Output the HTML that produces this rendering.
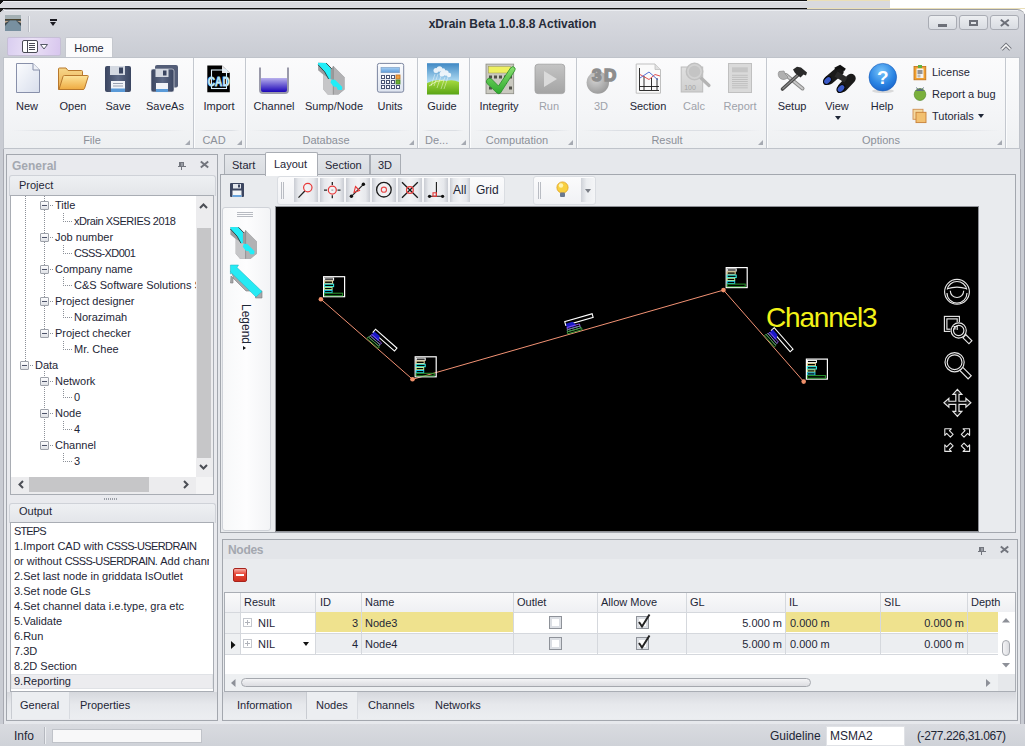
<!DOCTYPE html>
<html><head><meta charset="utf-8">
<style>
*{margin:0;padding:0;box-sizing:border-box}
html,body{width:1025px;height:746px;overflow:hidden;background:#fff}
body{position:relative;font-family:"Liberation Sans",sans-serif;font-size:11px;color:#1e2636}
.a{position:absolute}
.t{position:absolute;white-space:nowrap;line-height:13px;font-size:11px}
.c{text-align:center}
.gl{color:#8c9099}
.dis{color:#9ea2aa}
.sep{position:absolute;top:58px;width:2px;height:90px;border-left:1px solid #c4c8cf;border-right:1px solid #fbfcfd}
.gline{position:absolute;top:130px;height:1px;background:linear-gradient(90deg,rgba(215,218,224,0),#dcdfe4 20%,#dcdfe4 80%,rgba(215,218,224,0))}
.launch{position:absolute;width:0;height:0;border-left:5px solid transparent;border-bottom:5px solid #a6aab2;top:140px}
svg{position:absolute;overflow:visible}
</style></head><body>

<!-- top strip (other windows) -->
<div class="a" style="left:0;top:0;width:1025px;height:9px;background:#fff"></div>
<div class="a" style="left:0;top:0;width:890px;height:9px;background:#d9dadf"></div>
<div class="a" style="left:0;top:0;width:807px;height:1px;background:#111"></div>
<div class="a" style="left:807px;top:0;width:83px;height:1px;background:#eadfb8"></div>
<div class="a" style="left:0;top:8px;width:807px;height:1px;background:#111"></div>
<div class="a" style="left:3px;top:1px;width:804px;height:1px;background:#eceef2"></div>
<div class="a" style="left:0;top:0;width:3px;height:8px;background:linear-gradient(135deg,#111 40%,transparent 41%)"></div>
<div class="a" style="left:807px;top:8px;width:218px;height:1px;background:#eadfb8"></div>

<!-- window frame -->
<div class="a" style="left:0;top:9px;width:1025px;height:737px;background:linear-gradient(#dadce1,#d1d3da 25px,#c9ccd3 48px,#c9ccd3);border-radius:6px 8px 0 0;border-top:1px solid #9a9ca2"></div>

<div class="a" style="left:1024px;top:14px;width:1px;height:732px;background:#9a9ca6"></div>
<div class="a" style="left:4px;top:10px;width:1014px;height:1px;background:#eceef2"></div>
<div class="a" style="left:0;top:9px;width:4px;height:6px;background:linear-gradient(135deg,#222 35%,transparent 36%)"></div>
<!-- title -->
<div class="t" style="left:0;width:1025px;text-align:center;top:18px;font-weight:bold;font-size:12px;color:#262c3a">xDrain Beta 1.0.8.8 Activation</div>


<!-- quick access -->
<svg style="left:5px;top:15px" width="16" height="16"><rect width="16" height="16" fill="#6a7a84"/><rect y="0" width="16" height="4" fill="#a4b0b4"/><rect y="4" width="16" height="1.5" fill="#4a4430"/><path d="M0 5.5 L16 5.5 L16 16 L0 16 Z" fill="#3e4a50"/><path d="M5 5.5 L11 5.5 L16 11 L16 16 L0 16 L0 11 Z" fill="#7890a0"/><path d="M0 6 L4 6 L0 8 Z M16 6 L12 6 L16 8 Z" fill="#c0a890"/></svg>
<div class="a" style="left:28px;top:16px;width:1px;height:16px;background:#b9bcc4;box-shadow:1px 0 0 #eef0f3"></div>
<div class="a" style="left:50px;top:19px;width:7px;height:2px;background:#1b1b22"></div>
<div class="a" style="left:50px;top:22px;width:0;height:0;border-left:3.5px solid transparent;border-right:3.5px solid transparent;border-top:4px solid #1b1b22"></div>

<!-- window buttons -->
<div class="a" style="left:928px;top:15px;width:29px;height:15px;border:1px solid #a9acb4;border-radius:3px;background:linear-gradient(#eceef1,#d9dce2)"></div>
<div class="a" style="left:959px;top:15px;width:29px;height:15px;border:1px solid #a9acb4;border-radius:3px;background:linear-gradient(#eceef1,#d9dce2)"></div>
<div class="a" style="left:990px;top:15px;width:29px;height:15px;border:1px solid #a9acb4;border-radius:3px;background:linear-gradient(#eceef1,#d9dce2)"></div>
<div class="a" style="left:938px;top:24px;width:9px;height:2.5px;background:#6c6f78"></div>
<div class="a" style="left:969px;top:19.5px;width:9px;height:6.5px;border:2px solid #6c6f78"></div>
<svg style="left:1000px;top:19px" width="10" height="8"><path d="M0.8 0.8 L8.8 7 M8.8 0.8 L0.8 7" stroke="#6c6f78" stroke-width="2"/></svg>

<!-- ribbon tabs -->
<div class="a" style="left:7px;top:37px;width:54px;height:19px;border:1px solid #c6bfd6;border-radius:2px;background:linear-gradient(100deg,#d9cdf0,#ebe2f6 45%,#d8c6ee)"></div>
<div class="a" style="left:22px;top:40px;width:16px;height:13px;border:1px solid #4a4a55;border-radius:2px;background:#fff"></div>
<div class="a" style="left:27px;top:41px;width:1px;height:11px;background:#4a4a55"></div>
<div class="a" style="left:29px;top:43px;width:6px;height:7px;background:repeating-linear-gradient(#4a4a55 0 1px,transparent 1px 2px)"></div>
<svg style="left:40px;top:44px" width="8" height="6"><path d="M0.5 0.5 L7.5 0.5 L4 5 Z" fill="#fff" stroke="#555a66" stroke-width="1"/></svg>
<div class="a" style="left:65px;top:37px;width:48px;height:21px;border:1px solid #c5c8ce;border-bottom:none;border-radius:2px 2px 0 0;background:#fbfbfc"></div>
<div class="t" style="left:65px;width:48px;text-align:center;top:42px;color:#1e2636">Home</div>
<svg style="left:1000px;top:43px" width="12" height="8"><path d="M1.5 6.5 L6 2 L10.5 6.5" fill="none" stroke="#6d7079" stroke-width="3.4"/><path d="M1.5 6.5 L6 2 L10.5 6.5" fill="none" stroke="#fafafa" stroke-width="1.6"/></svg>

<!-- ribbon panel -->
<div class="a" style="left:3px;top:57px;width:1017px;height:92px;border:1px solid #bfc3ca;background:linear-gradient(#fbfbfc,#f4f5f7 60%,#eef0f2)"></div>
<div class="sep" style="left:193px"></div>
<div class="sep" style="left:245px"></div>
<div class="sep" style="left:417px"></div>
<div class="sep" style="left:469px"></div>
<div class="sep" style="left:576px"></div>
<div class="sep" style="left:766px"></div>
<div class="sep" style="left:1005px"></div>
<div class="gline" style="left:12px;width:174px"></div>
<div class="gline" style="left:198px;width:42px"></div>
<div class="gline" style="left:250px;width:162px"></div>
<div class="gline" style="left:422px;width:42px"></div>
<div class="gline" style="left:474px;width:97px"></div>
<div class="gline" style="left:581px;width:180px"></div>
<div class="gline" style="left:771px;width:229px"></div>
<div class="launch" style="left:185px"></div>
<div class="launch" style="left:237px"></div>
<div class="launch" style="left:409px"></div>
<div class="launch" style="left:461px"></div>
<div class="launch" style="left:568px"></div>
<div class="launch" style="left:758px"></div>
<div class="launch" style="left:997px"></div>

<!-- ribbon icons -->
<svg style="left:0;top:0" width="1025" height="150">
<defs>
<linearGradient id="gNew" x1="0" y1="0" x2="1" y2="1"><stop offset="0" stop-color="#fbfcfe"/><stop offset="1" stop-color="#d8deec"/></linearGradient>
<linearGradient id="gFold" x1="0" y1="0" x2="0" y2="1"><stop offset="0" stop-color="#fde49a"/><stop offset="1" stop-color="#eeaa40"/></linearGradient>
<linearGradient id="gFold2" x1="0" y1="0" x2="0" y2="1"><stop offset="0" stop-color="#f7d78a"/><stop offset="1" stop-color="#e8a848"/></linearGradient>
<linearGradient id="gFlop" x1="0" y1="0" x2="1" y2="0"><stop offset="0" stop-color="#3a4560"/><stop offset="0.5" stop-color="#5e6a86"/><stop offset="1" stop-color="#3a4560"/></linearGradient>
<linearGradient id="gLiq" x1="0" y1="0" x2="0" y2="1"><stop offset="0" stop-color="#b8b0ec"/><stop offset="1" stop-color="#1c06b8"/></linearGradient>
<linearGradient id="gCalc" x1="0" y1="0" x2="0" y2="1"><stop offset="0" stop-color="#fbfcfe"/><stop offset="1" stop-color="#dde3ee"/></linearGradient>
<linearGradient id="gDisp" x1="0" y1="0" x2="0" y2="1"><stop offset="0" stop-color="#a8d0f4"/><stop offset="1" stop-color="#5c9ad8"/></linearGradient>
<linearGradient id="gSky" x1="0" y1="0" x2="0" y2="1"><stop offset="0" stop-color="#3f88c4"/><stop offset="0.6" stop-color="#b4def4"/><stop offset="1" stop-color="#d8f0f8"/></linearGradient>
<linearGradient id="gGrass" x1="0" y1="0" x2="0" y2="1"><stop offset="0" stop-color="#a8dc40"/><stop offset="1" stop-color="#5aa414"/></linearGradient>
<linearGradient id="gRun" x1="0" y1="0" x2="0" y2="1"><stop offset="0" stop-color="#c4c4c4"/><stop offset="1" stop-color="#a4a4a4"/></linearGradient>
<radialGradient id="gSph" cx="0.4" cy="0.35" r="0.7"><stop offset="0" stop-color="#d4d4d4"/><stop offset="1" stop-color="#989898"/></radialGradient>
<radialGradient id="gHelp" cx="0.45" cy="0.3" r="0.75"><stop offset="0" stop-color="#78c4fa"/><stop offset="0.6" stop-color="#2c86e4"/><stop offset="1" stop-color="#1660c8"/></radialGradient>
<linearGradient id="gCheck" x1="0" y1="0" x2="0" y2="1"><stop offset="0" stop-color="#8ae070"/><stop offset="1" stop-color="#2eaa2e"/></linearGradient>
<linearGradient id="gGray" x1="0" y1="0" x2="0" y2="1"><stop offset="0" stop-color="#e0e0e0"/><stop offset="1" stop-color="#cfcfcf"/></linearGradient>
</defs>
<!-- New -->
<path d="M16.5 63.5 L33 63.5 L39.5 70 L39.5 92.5 L16.5 92.5 Z" fill="url(#gNew)" stroke="#8890aa" stroke-width="1"/>
<path d="M33 63.5 L33 70 L39.5 70" fill="#eef1f7" stroke="#8890aa" stroke-width="1"/>
<!-- Open -->
<path d="M58.5 89.5 L58.5 69 Q58.5 68 59.5 68 L66 68 L68 70.5 L81.5 70.5 Q82.5 70.5 82.5 71.5 L82.5 89.5 Z" fill="url(#gFold2)" stroke="#b8782c" stroke-width="1"/>
<path d="M59 89.5 L63 76.5 Q63.3 75.5 64.5 75.5 L87.5 75.5 Q88.5 75.5 88.2 76.5 L84.5 88.5 Q84.2 89.5 83 89.5 Z" fill="url(#gFold)" stroke="#b8782c" stroke-width="1"/>
<!-- Save -->
<rect x="105" y="66" width="26" height="26" rx="2" fill="url(#gFlop)"/>
<rect x="110" y="66" width="15" height="9" fill="#d4d9e2"/>
<rect x="119" y="67.5" width="4" height="6" fill="#3a4560"/>
<rect x="111" y="81" width="14" height="11" fill="#f2f4f8"/>
<rect x="111" y="88.5" width="14" height="3.5" fill="#5a9ad8"/>
<rect x="113" y="83" width="10" height="1" fill="#9aa2b2"/><rect x="113" y="85.5" width="10" height="1" fill="#9aa2b2"/>
<!-- SaveAs -->
<rect x="155" y="65" width="23" height="22.5" rx="2" fill="#545e78"/>
<rect x="151" y="69" width="23" height="23" rx="2" fill="url(#gFlop)" stroke="#e8eaee" stroke-width="0.6"/>
<rect x="155.5" y="69" width="13" height="8" fill="#d4d9e2"/>
<rect x="163" y="70.5" width="3.5" height="5" fill="#3a4560"/>
<rect x="156" y="83" width="12" height="9" fill="#f2f4f8"/>
<rect x="156" y="89" width="12" height="3" fill="#5a9ad8"/>
<!-- CAD -->
<path d="M207.3 65.4 L222 65.4 L229.8 73 L229.8 92.2 L207.3 92.2 Z" fill="#000"/>
<path d="M222 65.4 L229.8 73 L222 73 Z" fill="#e8e8ea"/>
<rect x="211.5" y="70" width="15" height="18.5" fill="none" stroke="#dff2ff" stroke-width="1.1"/>
<g transform="translate(0,86.5) scale(1,1.35) translate(0,-86.5)" style="font-family:'Liberation Sans';font-weight:700;font-size:10px" fill="#fff" stroke="#9ad8f4" stroke-width="0.7">
<text x="207.8" y="86.5">C</text><text x="215" y="86.5">A</text><text x="222.6" y="86.5">D</text></g>
<!-- Channel beaker -->
<rect x="261" y="78" width="26" height="14" fill="url(#gLiq)"/>
<path d="M260 67.5 L260 90 Q260 93 263 93 L285 93 Q288 93 288 90 L288 67.5" fill="none" stroke="#9a9aaa" stroke-width="2"/>
<!-- Sump/Node -->
<polygon points="318.1,64.6 318.1,70.2 323.4,74.8 323.4,89.5 327.7,94.6 338.4,94.6 344.5,89.5 344.5,77.3 333.3,66.1 331.6,68.7 326.2,63.1 318.1,62.8" fill="#9c9c9e"/>
<polygon points="333.3,66.1 344.5,77.3 344.5,89.5 338.4,94.6 333.3,94.6" fill="#b2b2b4"/>
<polygon points="323.4,74.8 333.3,80.5 333.3,94.6 327.7,94.6 323.4,89.5" fill="#c6c6c8"/>
<polyline points="333.3,66.1 333.3,94.6" fill="none" stroke="#8a8a8c" stroke-width="0.8"/>
<polygon points="318.1,62.8 326.2,63.1 330.6,68.3 330.6,79.0 328.6,79.0 324.7,71.9 318.1,65.0" fill="#22eef8"/>
<polyline points="318.1,64.8 324.7,71.9 328.6,79.0" fill="none" stroke="#2a3a3c" stroke-width="0.9"/>
<polyline points="326.2,63.1 331.8,68.8" fill="none" stroke="#2a3a3c" stroke-width="0.9"/>
<polygon points="331.5,79.6 335.0,79.8 342.3,87.0 341.8,90.0 338.0,90.0 336.5,87.0 333.5,86.5 330.5,82.5" fill="#22eef8"/>
<!-- Units calculator -->
<rect x="377.4" y="63.4" width="26.3" height="28.8" rx="2" fill="url(#gCalc)" stroke="#7c86a0" stroke-width="1"/>
<rect x="381" y="67.3" width="18.5" height="5.4" fill="url(#gDisp)" stroke="#7a9ac0" stroke-width="0.6"/>
<g fill="#fff" stroke="#4a5474" stroke-width="1">
<rect x="381.5" y="75.5" width="3" height="3"/><rect x="386.5" y="75.5" width="3" height="3"/><rect x="391.5" y="75.5" width="3" height="3"/>
<rect x="381.5" y="80.5" width="3" height="3"/><rect x="386.5" y="80.5" width="3" height="3"/><rect x="391.5" y="80.5" width="3" height="3"/>
<rect x="381.5" y="85.5" width="3" height="3"/><rect x="386.5" y="85.5" width="3" height="3"/><rect x="391.5" y="85.5" width="3" height="3"/><rect x="396.5" y="85.5" width="3" height="3"/>
</g>
<rect x="396" y="75" width="4" height="4" fill="#f0a040" stroke="#c07020" stroke-width="0.8"/>
<rect x="396" y="80" width="4" height="4" fill="#70b030" stroke="#408020" stroke-width="0.8"/>
<!-- Guide -->
<rect x="427" y="63.2" width="32" height="31.4" fill="url(#gSky)"/>
<path d="M427 83 Q437 78 446 81 Q453 79 459 82 L459 94.6 L427 94.6 Z" fill="url(#gGrass)"/>
<path d="M429 86 Q436 80 444 80" fill="none" stroke="#e8f8c0" stroke-width="1" opacity="0.8"/>
<g fill="#fff" opacity="0.85"><circle cx="436" cy="70.5" r="2.5"/><circle cx="439.5" cy="69" r="2.8"/><circle cx="443" cy="70.5" r="2.3"/><circle cx="442" cy="74" r="2.5"/><circle cx="446" cy="73" r="2.7"/><circle cx="449" cy="75" r="2.2"/></g>
<path d="M435 74 L431 86 M438 74 L434 86 M441 76 L437 88 M445 77 L441 89 M448 77 L444 89" stroke="#fff" stroke-width="0.6" opacity="0.7"/>
<!-- Integrity -->
<rect x="486" y="64.1" width="27.7" height="29.6" fill="#cac9c0" stroke="#8c8c84" stroke-width="0.8"/>
<rect x="488.5" y="66.5" width="22" height="6.5" fill="#eef060" stroke="#9a9a50" stroke-width="0.5"/>
<g fill="#505048"><rect x="489" y="75.5" width="3" height="3"/><rect x="494" y="75.5" width="3" height="3"/><rect x="499" y="75.5" width="3" height="3"/><rect x="504" y="75.5" width="3" height="3"/><rect x="489" y="81" width="3" height="3"/><rect x="504" y="81" width="3" height="3"/><rect x="489" y="86.5" width="3" height="3"/><rect x="509" y="86.5" width="3" height="3"/><rect x="509" y="75.5" width="3" height="3"/></g>
<path d="M486.5 80.5 Q488 77 491 78.5 L498.5 86 L510.5 68 Q513 65 515 68 Q515.5 69.5 514.5 71 L500.5 93 Q499 94.5 497 93 L487 83.5 Q486 82 486.5 80.5 Z" fill="url(#gCheck)" stroke="#2a8a2a" stroke-width="0.8"/>
<!-- Run -->
<rect x="535" y="64.2" width="29.7" height="29.4" rx="3" fill="url(#gRun)" stroke="#a0a0a0" stroke-width="0.8"/>
<path d="M544 71 L557 79 L544 87 Z" fill="#dadada"/>
<!-- 3D -->
<circle cx="597.8" cy="82.6" r="11.2" fill="url(#gSph)"/>
<text x="592" y="80.8" style="font-family:'Liberation Sans';font-weight:700;font-size:17px" fill="#8e8e8e" stroke="#8e8e8e" stroke-width="1.6" letter-spacing="2.5">3D</text>
<!-- Section -->
<path d="M636.2 64 L655 64 L660.5 69.5 L660.5 93.2 L636.2 93.2 Z" fill="#fafafa" stroke="#c0c0c0" stroke-width="1"/>
<path d="M655 64 L655 69.5 L660.5 69.5" fill="#e0e0e0" stroke="#c0c0c0" stroke-width="0.8"/>
<path d="M639.5 68 L639.5 90.5 L659 90.5 M639.5 86.5 L659 86.5 M644 76 L644 90 M651.5 78 L651.5 90 M657 78 L657 90" fill="none" stroke="#1a1a1a" stroke-width="0.9"/>
<path d="M640 74.5 L649 79.5 L655 74.5 L660 76" fill="none" stroke="#e04040" stroke-width="0.9"/>
<path d="M640 78 L649 72 L658 80" fill="none" stroke="#4060d0" stroke-width="0.9"/>
<!-- Calc -->
<rect x="681.2" y="67" width="21.5" height="25" fill="url(#gGray)" stroke="#bcbcbc" stroke-width="1"/>
<path d="M700 77 L709 85.5" stroke="#b4b4b4" stroke-width="3.2" stroke-linecap="round"/>
<circle cx="694.5" cy="71.5" r="8.2" fill="#d2d2d2" stroke="#c0c0c0" stroke-width="1.5"/>
<circle cx="694.5" cy="71.5" r="5.8" fill="#c4c4c4"/>
<text x="690" y="90" font-family="Liberation Sans" font-size="7" fill="#a6a6a6" text-anchor="middle">100</text>
<!-- Report -->
<rect x="728.5" y="63.5" width="23" height="29" fill="#dadada" stroke="#c0c0c0" stroke-width="1"/>
<rect x="732" y="67.3" width="15.8" height="5" fill="#c6c6c6"/>
<g fill="#bdbdbd"><rect x="732" y="74.8" width="15.8" height="0.9"/><rect x="732" y="76.9" width="15.8" height="0.9"/><rect x="732" y="79" width="15.8" height="0.9"/><rect x="732" y="81.1" width="15.8" height="0.9"/><rect x="732" y="83.2" width="15.8" height="0.9"/><rect x="732" y="85.3" width="15.8" height="0.9"/><rect x="732" y="87.4" width="15.8" height="0.9"/></g>
<!-- Setup -->
<path d="M786 75 L802.5 88.5" stroke="#8a8a8a" stroke-width="4" stroke-linecap="round"/>
<path d="M786 75 L802.5 88.5" stroke="#c8c8c8" stroke-width="2" stroke-linecap="round"/>
<path d="M779 71.5 A5 5 0 0 0 788 77 L785.5 74.5 L784 71 Z" fill="#b0b0b0" stroke="#8a8a8a" stroke-width="0.7"/>
<path d="M782.5 89 L798 75" stroke="#4a4a4a" stroke-width="3.6" stroke-linecap="round"/>
<path d="M782.5 89 L798 75" stroke="#8a8a8a" stroke-width="1.2"/>
<path d="M793 69.5 L797 66.8 L801 67.5 L807 72.5 L806 75.5 L803.5 74.5 L800.5 77.5 L795 73 Z" fill="#2a2a2a"/>
<!-- View binoculars -->
<path d="M829 80 L839 71.5" stroke="#1a1a1a" stroke-width="9.5" stroke-linecap="round"/>
<path d="M842.5 87.5 L851 78.5" stroke="#1a1a1a" stroke-width="9.5" stroke-linecap="round"/>
<path d="M836 74 L846 80" stroke="#2a2a2a" stroke-width="6"/>
<path d="M835 69 L840 66.5 L845 70" stroke="#111" stroke-width="3" fill="none"/>
<ellipse cx="827.5" cy="80.5" rx="4.5" ry="3.3" transform="rotate(-45 827.5 80.5)" fill="#3a5ac8" stroke="#0a0a0a" stroke-width="1.3"/>
<ellipse cx="841" cy="88.5" rx="4.5" ry="3.3" transform="rotate(-45 841 88.5)" fill="#3a5ac8" stroke="#0a0a0a" stroke-width="1.3"/>
<!-- Help -->
<ellipse cx="883" cy="91" rx="11" ry="2" fill="#000" opacity="0.12"/>
<circle cx="882.8" cy="77.2" r="13.8" fill="url(#gHelp)" stroke="#1a5cb8" stroke-width="0.6"/>
<text x="882.8" y="84" font-family="Liberation Sans" font-weight="bold" font-size="19" fill="#fff" text-anchor="middle">?</text>
<!-- License -->
<rect x="914" y="66.5" width="11.8" height="13.3" fill="#f0a030" stroke="#c07018" stroke-width="0.8"/>
<rect x="916.5" y="68.5" width="7" height="9.5" fill="#f4f4f4"/>
<rect x="917.5" y="70.5" width="5" height="1" fill="#333"/><rect x="917.5" y="72.5" width="5" height="1" fill="#333"/><rect x="917.5" y="74.5" width="3" height="3" fill="#bbb"/>
<rect x="918" y="65" width="4" height="3" fill="#60b040"/>
<!-- Bug -->
<ellipse cx="920" cy="94.5" rx="5.8" ry="6" fill="#7ab03c" stroke="#4a8020" stroke-width="0.6"/>
<path d="M915.5 91 Q920 86 924.5 91 Z" fill="#5a6a80"/>
<path d="M916.5 87.5 L917.5 89 M923.5 87.5 L922.5 89" stroke="#5a6a80" stroke-width="1"/>
<!-- Tutorials -->
<rect x="913" y="109.3" width="10" height="10" fill="#f4d8a0" stroke="#d09050" stroke-width="0.9"/>
<rect x="916" y="112.3" width="10" height="10.3" fill="#f2c070" stroke="#c88038" stroke-width="0.9"/>
</svg>

<!-- group labels -->
<div class="t c gl" style="left:42px;width:100px;top:134px">File</div>
<div class="t c gl" style="left:164px;width:100px;top:134px">CAD</div>
<div class="t c gl" style="left:276px;width:100px;top:134px">Database</div>
<div class="t gl" style="left:425px;top:134px">De...</div>
<div class="t c gl" style="left:467px;width:100px;top:134px">Computation</div>
<div class="t c gl" style="left:617px;width:100px;top:134px">Result</div>
<div class="t c gl" style="left:831px;width:100px;top:134px">Options</div>

<!-- button labels -->
<div class="t c" style="left:-3px;width:60px;top:100px">New</div>
<div class="t c" style="left:43px;width:60px;top:100px">Open</div>
<div class="t c" style="left:88px;width:60px;top:100px">Save</div>
<div class="t c" style="left:135px;width:60px;top:100px">SaveAs</div>
<div class="t c" style="left:189px;width:60px;top:100px">Import</div>
<div class="t c" style="left:244px;width:60px;top:100px">Channel</div>
<div class="t c" style="left:299px;width:70px;top:100px">Sump/Node</div>
<div class="t c" style="left:360px;width:60px;top:100px">Units</div>
<div class="t c" style="left:412px;width:60px;top:100px">Guide</div>
<div class="t c" style="left:469px;width:60px;top:100px">Integrity</div>
<div class="t c dis" style="left:519px;width:60px;top:100px">Run</div>
<div class="t c dis" style="left:571px;width:60px;top:100px">3D</div>
<div class="t c" style="left:618px;width:60px;top:100px">Section</div>
<div class="t c dis" style="left:664px;width:60px;top:100px">Calc</div>
<div class="t c dis" style="left:710px;width:60px;top:100px">Report</div>
<div class="t c" style="left:762px;width:60px;top:100px">Setup</div>
<div class="t c" style="left:807px;width:60px;top:100px">View</div>
<div class="a" style="left:835px;top:116px;width:0;height:0;border-left:3px solid transparent;border-right:3px solid transparent;border-top:4px solid #1e2636"></div>
<div class="t c" style="left:852px;width:60px;top:100px">Help</div>
<div class="t" style="left:932px;top:66px">License</div>
<div class="t" style="left:932px;top:88px">Report a bug</div>
<div class="t" style="left:932px;top:110px">Tutorials</div>
<div class="a" style="left:978px;top:114px;width:0;height:0;border-left:3px solid transparent;border-right:3px solid transparent;border-top:4px solid #1e2636"></div>


<!-- body bg -->
<div class="a" style="left:3px;top:149px;width:1018px;height:575px;background:#e6e8ec;border-left:1px solid #a8aab2;border-right:1px solid #a8aab2"></div>

<!-- ============ General panel ============ -->
<div class="a" style="left:6px;top:154px;width:212px;height:567px;border:1px solid #a3a7ae;background:#e9eaee"></div>
<div class="t" style="left:12px;top:160px;font-weight:bold;font-size:12px;color:#a4a8b0">General</div>
<!-- pin -->
<div class="a" style="left:179px;top:162px;width:5px;height:5px;border:1px solid #73767e;border-left-width:2px;background:#9a9da5"></div>
<div class="a" style="left:178px;top:166px;width:8px;height:1px;background:#73767e"></div>
<div class="a" style="left:181px;top:167px;width:1px;height:3px;background:#73767e"></div>
<svg style="left:200px;top:161px" width="9" height="7"><path d="M0.8 0.5 L8.2 6.5 M8.2 0.5 L0.8 6.5" stroke="#73767e" stroke-width="2"/></svg>
<!-- project header -->
<div class="a" style="left:9px;top:175px;width:207px;height:21px;border:1px solid #cfd2d8;border-bottom:none;border-radius:3px 3px 0 0;background:linear-gradient(#eef0f3,#e3e5e9)"></div>
<div class="t" style="left:19px;top:179px;color:#1e2636">Project</div>
<!-- tree box -->
<div class="a" style="left:10px;top:195px;width:204px;height:300px;border:1px solid #a9adb4;background:#fff"></div>
<!-- tree -->
<div class="a" style="left:11px;top:196px;width:185px;height:281px;overflow:hidden">
<div class="a" style="left:14px;top:0px;width:1px;height:165px;background:repeating-linear-gradient(#8c9098 0 1px,transparent 1px 2px)"></div>
<div class="a" style="left:33px;top:0px;width:1px;height:133px;background:repeating-linear-gradient(#8c9098 0 1px,transparent 1px 2px)"></div>
<div class="a" style="left:33px;top:175px;width:1px;height:70px;background:repeating-linear-gradient(#8c9098 0 1px,transparent 1px 2px)"></div>
<div class="a" style="left:29px;top:5px;width:9px;height:9px;border:1px solid #9da1a9;border-radius:1px;background:linear-gradient(#fdfdfe,#dfe1e6)"></div><div class="a" style="left:31px;top:9px;width:5px;height:1px;background:#4d5369"></div>
<div class="a" style="left:39px;top:9px;width:3px;height:1px;background:repeating-linear-gradient(90deg,#8c9098 0 1px,transparent 1px 2px)"></div>
<div class="t" style="left:44px;top:3px">Title</div>
<div class="a" style="left:52px;top:17px;width:1px;height:8px;background:repeating-linear-gradient(#8c9098 0 1px,transparent 1px 2px)"></div>
<div class="a" style="left:52px;top:25px;width:9px;height:1px;background:repeating-linear-gradient(90deg,#8c9098 0 1px,transparent 1px 2px)"></div>
<div class="t" style="left:63px;top:19px"><span style="letter-spacing:-0.45px">xDrain XSERIES 2018</span></div>
<div class="a" style="left:29px;top:37px;width:9px;height:9px;border:1px solid #9da1a9;border-radius:1px;background:linear-gradient(#fdfdfe,#dfe1e6)"></div><div class="a" style="left:31px;top:41px;width:5px;height:1px;background:#4d5369"></div>
<div class="a" style="left:39px;top:41px;width:3px;height:1px;background:repeating-linear-gradient(90deg,#8c9098 0 1px,transparent 1px 2px)"></div>
<div class="t" style="left:44px;top:35px">Job number</div>
<div class="a" style="left:52px;top:49px;width:1px;height:8px;background:repeating-linear-gradient(#8c9098 0 1px,transparent 1px 2px)"></div>
<div class="a" style="left:52px;top:57px;width:9px;height:1px;background:repeating-linear-gradient(90deg,#8c9098 0 1px,transparent 1px 2px)"></div>
<div class="t" style="left:63px;top:51px"><span style="letter-spacing:-0.6px">CSSS-XD001</span></div>
<div class="a" style="left:29px;top:69px;width:9px;height:9px;border:1px solid #9da1a9;border-radius:1px;background:linear-gradient(#fdfdfe,#dfe1e6)"></div><div class="a" style="left:31px;top:73px;width:5px;height:1px;background:#4d5369"></div>
<div class="a" style="left:39px;top:73px;width:3px;height:1px;background:repeating-linear-gradient(90deg,#8c9098 0 1px,transparent 1px 2px)"></div>
<div class="t" style="left:44px;top:67px">Company name</div>
<div class="a" style="left:52px;top:81px;width:1px;height:8px;background:repeating-linear-gradient(#8c9098 0 1px,transparent 1px 2px)"></div>
<div class="a" style="left:52px;top:89px;width:9px;height:1px;background:repeating-linear-gradient(90deg,#8c9098 0 1px,transparent 1px 2px)"></div>
<div class="t" style="left:63px;top:83px">C&amp;S Software Solutions S</div>
<div class="a" style="left:29px;top:101px;width:9px;height:9px;border:1px solid #9da1a9;border-radius:1px;background:linear-gradient(#fdfdfe,#dfe1e6)"></div><div class="a" style="left:31px;top:105px;width:5px;height:1px;background:#4d5369"></div>
<div class="a" style="left:39px;top:105px;width:3px;height:1px;background:repeating-linear-gradient(90deg,#8c9098 0 1px,transparent 1px 2px)"></div>
<div class="t" style="left:44px;top:99px">Project designer</div>
<div class="a" style="left:52px;top:113px;width:1px;height:8px;background:repeating-linear-gradient(#8c9098 0 1px,transparent 1px 2px)"></div>
<div class="a" style="left:52px;top:121px;width:9px;height:1px;background:repeating-linear-gradient(90deg,#8c9098 0 1px,transparent 1px 2px)"></div>
<div class="t" style="left:63px;top:115px">Norazimah</div>
<div class="a" style="left:29px;top:133px;width:9px;height:9px;border:1px solid #9da1a9;border-radius:1px;background:linear-gradient(#fdfdfe,#dfe1e6)"></div><div class="a" style="left:31px;top:137px;width:5px;height:1px;background:#4d5369"></div>
<div class="a" style="left:39px;top:137px;width:3px;height:1px;background:repeating-linear-gradient(90deg,#8c9098 0 1px,transparent 1px 2px)"></div>
<div class="t" style="left:44px;top:131px">Project checker</div>
<div class="a" style="left:52px;top:145px;width:1px;height:8px;background:repeating-linear-gradient(#8c9098 0 1px,transparent 1px 2px)"></div>
<div class="a" style="left:52px;top:153px;width:9px;height:1px;background:repeating-linear-gradient(90deg,#8c9098 0 1px,transparent 1px 2px)"></div>
<div class="t" style="left:63px;top:147px">Mr. Chee</div>
<div class="a" style="left:9px;top:165px;width:9px;height:9px;border:1px solid #9da1a9;border-radius:1px;background:linear-gradient(#fdfdfe,#dfe1e6)"></div><div class="a" style="left:11px;top:169px;width:5px;height:1px;background:#4d5369"></div>
<div class="a" style="left:19px;top:169px;width:4px;height:1px;background:repeating-linear-gradient(90deg,#8c9098 0 1px,transparent 1px 2px)"></div>
<div class="t" style="left:24px;top:163px">Data</div>
<div class="a" style="left:29px;top:181px;width:9px;height:9px;border:1px solid #9da1a9;border-radius:1px;background:linear-gradient(#fdfdfe,#dfe1e6)"></div><div class="a" style="left:31px;top:185px;width:5px;height:1px;background:#4d5369"></div>
<div class="a" style="left:39px;top:185px;width:3px;height:1px;background:repeating-linear-gradient(90deg,#8c9098 0 1px,transparent 1px 2px)"></div>
<div class="t" style="left:44px;top:179px">Network</div>
<div class="a" style="left:52px;top:193px;width:1px;height:8px;background:repeating-linear-gradient(#8c9098 0 1px,transparent 1px 2px)"></div>
<div class="a" style="left:52px;top:201px;width:9px;height:1px;background:repeating-linear-gradient(90deg,#8c9098 0 1px,transparent 1px 2px)"></div>
<div class="t" style="left:63px;top:195px">0</div>
<div class="a" style="left:29px;top:213px;width:9px;height:9px;border:1px solid #9da1a9;border-radius:1px;background:linear-gradient(#fdfdfe,#dfe1e6)"></div><div class="a" style="left:31px;top:217px;width:5px;height:1px;background:#4d5369"></div>
<div class="a" style="left:39px;top:217px;width:3px;height:1px;background:repeating-linear-gradient(90deg,#8c9098 0 1px,transparent 1px 2px)"></div>
<div class="t" style="left:44px;top:211px">Node</div>
<div class="a" style="left:52px;top:225px;width:1px;height:8px;background:repeating-linear-gradient(#8c9098 0 1px,transparent 1px 2px)"></div>
<div class="a" style="left:52px;top:233px;width:9px;height:1px;background:repeating-linear-gradient(90deg,#8c9098 0 1px,transparent 1px 2px)"></div>
<div class="t" style="left:63px;top:227px">4</div>
<div class="a" style="left:29px;top:245px;width:9px;height:9px;border:1px solid #9da1a9;border-radius:1px;background:linear-gradient(#fdfdfe,#dfe1e6)"></div><div class="a" style="left:31px;top:249px;width:5px;height:1px;background:#4d5369"></div>
<div class="a" style="left:39px;top:249px;width:3px;height:1px;background:repeating-linear-gradient(90deg,#8c9098 0 1px,transparent 1px 2px)"></div>
<div class="t" style="left:44px;top:243px">Channel</div>
<div class="a" style="left:52px;top:257px;width:1px;height:8px;background:repeating-linear-gradient(#8c9098 0 1px,transparent 1px 2px)"></div>
<div class="a" style="left:52px;top:265px;width:9px;height:1px;background:repeating-linear-gradient(90deg,#8c9098 0 1px,transparent 1px 2px)"></div>
<div class="t" style="left:63px;top:259px">3</div>
</div>
<!-- vscroll -->
<div class="a" style="left:196px;top:196px;width:17px;height:281px;background:#ececee"></div>
<div class="a" style="left:197px;top:228px;width:14px;height:230px;background:#c6c6c8"></div>
<svg style="left:199px;top:203px" width="9" height="6"><path d="M1 5 L4.5 1.5 L8 5" fill="none" stroke="#4b4e55" stroke-width="2"/></svg>
<svg style="left:199px;top:464px" width="9" height="6"><path d="M1 1 L4.5 4.5 L8 1" fill="none" stroke="#4b4e55" stroke-width="2"/></svg>
<!-- hscroll -->
<div class="a" style="left:11px;top:477px;width:185px;height:17px;background:#ececee"></div>
<div class="a" style="left:29px;top:477px;width:120px;height:15px;background:#c6c6c8"></div>
<svg style="left:18px;top:480px" width="6" height="9"><path d="M5 1 L1.5 4.5 L5 8" fill="none" stroke="#4b4e55" stroke-width="2"/></svg>
<svg style="left:183px;top:480px" width="6" height="9"><path d="M1 1 L4.5 4.5 L1 8" fill="none" stroke="#4b4e55" stroke-width="2"/></svg>
<div class="a" style="left:196px;top:477px;width:17px;height:17px;background:#f4f4f5"></div>

<!-- splitter grip -->
<div class="a" style="left:104px;top:498px;width:14px;height:2px;background:repeating-linear-gradient(90deg,#9a9ea6 0 1px,transparent 1px 2px)"></div>
<!-- output header -->
<div class="a" style="left:9px;top:503px;width:207px;height:20px;border:1px solid #cfd2d8;border-bottom:none;border-radius:3px 3px 0 0;background:linear-gradient(#eef0f3,#e3e5e9)"></div>
<div class="t" style="left:19px;top:505px;color:#1e2636">Output</div>
<div class="a" style="left:10px;top:522px;width:204px;height:170px;border:1px solid #a9adb4;background:#fff"></div>
<div class="a" style="left:11px;top:674px;width:202px;height:15px;background:#ececef"></div>
<div class="a" style="left:11px;top:674px;width:202px;height:15px;background:#ececef;border:1px solid #e0e2e6"></div>
<div class="a" style="left:11px;top:523px;width:198px;height:168px;overflow:hidden">

<div class="t" style="left:3px;top:2px"><span style="letter-spacing:-0.9px">STEPS</span></div>
<div class="t" style="left:3px;top:17px">1.Import CAD with <span style="letter-spacing:-0.6px">CSSS-USERDRAIN</span></div>
<div class="t" style="left:3px;top:32px">or without <span style="letter-spacing:-0.6px">CSSS-USERDRAIN</span>. Add channel</div>
<div class="t" style="left:3px;top:47px">2.Set last node in griddata IsOutlet</div>
<div class="t" style="left:3px;top:62px">3.Set node GLs</div>
<div class="t" style="left:3px;top:77px">4.Set channel data i.e.type, gra etc</div>
<div class="t" style="left:3px;top:92px">5.Validate</div>
<div class="t" style="left:3px;top:107px">6.Run</div>
<div class="t" style="left:3px;top:122px">7.3D</div>
<div class="t" style="left:3px;top:137px">8.2D Section</div>
<div class="t" style="left:3px;top:152px">9.Reporting</div>
</div>
<!-- bottom tabs -->
<div class="a" style="left:7px;top:692px;width:210px;height:27px;background:linear-gradient(#d6d8dd,#e6e8ec 45%,#eceef1)"></div>
<div class="a" style="left:11px;top:692px;width:59px;height:27px;background:#eceef1;border-left:1px solid #c9ccd2;border-right:1px solid #d8dbe0"></div>
<div class="t" style="left:20px;top:699px">General</div>
<div class="t" style="left:80px;top:699px">Properties</div>


<!-- ============ Document area ============ -->
<div class="a" style="left:224px;top:154px;width:42px;height:21px;border:1px solid #a9adb4;border-bottom:none;background:linear-gradient(#e4e6ea,#d9dce1)"></div>
<div class="a" style="left:317px;top:154px;width:53px;height:21px;border:1px solid #a9adb4;border-bottom:none;background:linear-gradient(#e4e6ea,#d9dce1)"></div>
<div class="a" style="left:370px;top:154px;width:31px;height:21px;border:1px solid #a9adb4;border-bottom:none;background:linear-gradient(#e4e6ea,#d9dce1)"></div>
<div class="a" style="left:220px;top:174px;width:796px;height:359px;border:1px solid #a3a7ae;background:#e9ebee"></div>
<div class="a" style="left:265px;top:152px;width:53px;height:24px;border:1px solid #a9adb4;border-bottom:none;border-radius:2px 2px 0 0;background:#fff"></div>
<div class="t" style="left:232px;top:159px">Start</div>
<div class="t" style="left:274px;top:158px">Layout</div>
<div class="t" style="left:325px;top:159px">Section</div>
<div class="t" style="left:378px;top:159px">3D</div>

<!-- toolbars -->
<div class="a" style="left:277px;top:176px;width:228px;height:29px;border:1px solid #dadde2;border-radius:3px;background:linear-gradient(#fbfbfc,#f1f2f5)"></div>
<div class="a" style="left:533px;top:176px;width:63px;height:29px;border:1px solid #dadde2;border-radius:3px;background:linear-gradient(#fbfbfc,#f1f2f5)"></div>

<!-- toolbar buttons -->
<div class="a" style="left:294px;top:178px;width:24px;height:24px;background:linear-gradient(90deg,#c9ccd3,#e6e8ec 18%,#f2f3f5 50%,#e6e8ec 82%,#c9ccd3)"></div>
<div class="a" style="left:320px;top:178px;width:24px;height:24px;background:linear-gradient(90deg,#c9ccd3,#e6e8ec 18%,#f2f3f5 50%,#e6e8ec 82%,#c9ccd3)"></div>
<div class="a" style="left:346px;top:178px;width:24px;height:24px;background:linear-gradient(90deg,#c9ccd3,#e6e8ec 18%,#f2f3f5 50%,#e6e8ec 82%,#c9ccd3)"></div>
<div class="a" style="left:372px;top:178px;width:24px;height:24px;background:linear-gradient(90deg,#c9ccd3,#e6e8ec 18%,#f2f3f5 50%,#e6e8ec 82%,#c9ccd3)"></div>
<div class="a" style="left:398px;top:178px;width:24px;height:24px;background:linear-gradient(90deg,#c9ccd3,#e6e8ec 18%,#f2f3f5 50%,#e6e8ec 82%,#c9ccd3)"></div>
<div class="a" style="left:424px;top:178px;width:24px;height:24px;background:linear-gradient(90deg,#c9ccd3,#e6e8ec 18%,#f2f3f5 50%,#e6e8ec 82%,#c9ccd3)"></div>
<div class="a" style="left:450px;top:178px;width:20px;height:24px;background:linear-gradient(90deg,#c9ccd3,#e6e8ec 18%,#f2f3f5 50%,#e6e8ec 82%,#c9ccd3)"></div>
<div class="a" style="left:281px;top:182px;width:4px;height:17px;background:repeating-linear-gradient(90deg,#b9bcc3 0 1px,transparent 1px 2px)"></div>
<div class="a" style="left:538px;top:182px;width:4px;height:17px;background:repeating-linear-gradient(90deg,#b9bcc3 0 1px,transparent 1px 2px)"></div>
<div class="a" style="left:581px;top:178px;width:14px;height:24px;background:linear-gradient(90deg,#cfd2d8,#eceef1 40%,#f4f5f7)"></div>
<div class="a" style="left:585px;top:189px;width:0;height:0;border-left:3.5px solid transparent;border-right:3.5px solid transparent;border-top:4px solid #7a7e86"></div>
<svg style="left:0;top:0" width="1025" height="220">
<path d="M298.5 197.6 L304.8 191" stroke="#222" stroke-width="1.3"/>
<circle cx="307.8" cy="187.6" r="4.2" fill="none" stroke="#e83838" stroke-width="1.2"/>
<circle cx="332.3" cy="190.1" r="4" fill="none" stroke="#e83838" stroke-width="1.2"/>
<path d="M332.3 182 L332.3 185 M332.3 195.3 L332.3 198.2 M324 190.1 L327 190.1 M337.5 190.1 L340.5 190.1" stroke="#222" stroke-width="1.3"/>
<path d="M331.3 190.1 L333.3 190.1" stroke="#777" stroke-width="0.8"/>
<path d="M351.4 196.3 L363.4 184.3" stroke="#222" stroke-width="1.1"/>
<circle cx="351.4" cy="196.3" r="1.7" fill="#111"/><circle cx="363.4" cy="184.3" r="1.7" fill="#111"/>
<path d="M355.5 186.5 L359.5 190.5 L354 192.5 Z" fill="none" stroke="#e83838" stroke-width="1.1"/>
<circle cx="383.9" cy="189.7" r="7.3" fill="none" stroke="#1a1a1a" stroke-width="1.3"/>
<circle cx="383.9" cy="189.7" r="2.6" fill="none" stroke="#e84848" stroke-width="1.1"/>
<path d="M402 182.2 L417.8 197.7 M417.8 182.2 L402 197.7" stroke="#1a1a1a" stroke-width="1.3"/>
<circle cx="409.9" cy="190" r="3.4" fill="none" stroke="#e83838" stroke-width="1.2"/>
<path d="M436.4 182 L436.4 196.3 L442.6 196.3 M429.5 196.3 L436.4 196.3" fill="none" stroke="#1a1a1a" stroke-width="1.1"/>
<rect x="433" y="192.8" width="3.4" height="3.5" fill="none" stroke="#e83838" stroke-width="1.1"/>
<circle cx="429.5" cy="196.3" r="1.6" fill="#111"/><circle cx="442.6" cy="196.3" r="1.6" fill="#111"/>
<!-- bulb -->
<circle cx="562.5" cy="187.5" r="5.6" fill="#f8d040" stroke="#e0a020" stroke-width="0.8"/>
<circle cx="561" cy="185.5" r="2.2" fill="#fff4b0"/>
<rect x="560" y="192.5" width="5" height="4.5" rx="1" fill="#6a7890"/>
<!-- save small -->
<rect x="230" y="183" width="14" height="14" rx="1" fill="#3c4660"/>
<rect x="233" y="184" width="8" height="4.5" fill="#e2e6ec"/><rect x="238" y="184.5" width="2" height="3" fill="#3c4660"/>
<rect x="232.5" y="190.5" width="9" height="6.5" fill="#f4f6f8"/><rect x="232.5" y="195" width="9" height="2" fill="#6aa4dc"/>
</svg>
<div class="t" style="left:453px;top:184px;font-size:12px">All</div>
<div class="t" style="left:476px;top:184px;font-size:12px">Grid</div>
<!-- legend side panel -->
<div class="a" style="left:222px;top:207px;width:49px;height:324px;border:1px solid #cfd2d8;border-radius:3px;background:linear-gradient(90deg,#f7f8f9,#fdfdfe 50%,#f3f4f6)"></div>

<!-- legend icons -->
<div class="a" style="left:237px;top:212px;width:16px;height:5px;background:repeating-linear-gradient(#b8bbc2 0 1px,transparent 1px 2px)"></div>
<svg style="left:0;top:0" width="1025" height="400">
<polygon points="230.4,228.8 230.4,234.4 235.7,239.0 235.7,253.7 240.0,258.8 250.7,258.8 256.8,253.7 256.8,241.5 245.6,230.3 243.9,232.9 238.5,227.3 230.4,227.0" fill="#9c9c9e"/>
<polygon points="245.6,230.3 256.8,241.5 256.8,253.7 250.7,258.8 245.6,258.8" fill="#b2b2b4"/>
<polygon points="235.7,239.0 245.6,244.7 245.6,258.8 240.0,258.8 235.7,253.7" fill="#c6c6c8"/>
<polyline points="245.6,230.3 245.6,258.8" fill="none" stroke="#8a8a8c" stroke-width="0.8"/>
<polygon points="230.4,227.0 238.5,227.3 242.9,232.5 242.9,243.2 240.9,243.2 237.0,236.1 230.4,229.2" fill="#22eef8"/>
<polyline points="230.4,229.0 237.0,236.1 240.9,243.2" fill="none" stroke="#2a3a3c" stroke-width="0.9"/>
<polyline points="238.5,227.3 244.1,233.0" fill="none" stroke="#2a3a3c" stroke-width="0.9"/>
<polygon points="243.8,243.8 247.3,244.0 254.6,251.2 254.1,254.2 250.3,254.2 248.8,251.2 245.8,250.7 242.8,246.7" fill="#22eef8"/>
<polygon points="230.5,271 233,271 255.5,293.5 255.5,298 262,298 262,291 246,291 231,276 230.5,283 233,283 233,276" fill="#a8a8aa" stroke="#7c7c80" stroke-width="0.6"/>
<polygon points="230.4,265 238.5,265 237,267.5 262,291.5 256,297 231.5,273 230.4,274" fill="#26eaf4" stroke="#1cb0bc" stroke-width="0.5"/>
</svg>
<div class="t" style="left:240px;top:304px;width:40px;height:13px;transform-origin:0 0;transform:rotate(90deg) translate(0,-12px);font-size:12px">Legend</div>
<div class="a" style="left:243px;top:345.5px;width:0;height:0;border-top:2.5px solid transparent;border-bottom:2.5px solid transparent;border-left:3.5px solid #111"></div>
<!-- canvas -->
<div class="a" style="left:275px;top:206px;width:704px;height:326px;background:#000;border:1px solid #8e9096"></div>



<!-- canvas drawing -->
<svg style="left:0;top:0" width="1025" height="746">
<polyline points="320.9,299.2 412.5,379.3 723.5,290.1 803.7,381.6" fill="none" stroke="#f29274" stroke-width="1"/>
<g transform="translate(323.1,276.2)">
<rect x="0.5" y="0.5" width="21" height="20" fill="none" stroke="#fff" stroke-width="1.2"/>
<rect x="1.5" y="1.8" width="9" height="2.2" fill="none" stroke="#fff" stroke-width="1"/>
<rect x="1.5" y="4.8" width="8" height="2.4" fill="none" stroke="#eedc9a" stroke-width="1"/>
<rect x="1.5" y="8" width="9" height="2.4" fill="none" stroke="#38e8e0" stroke-width="1.1"/>
<rect x="1.5" y="11.2" width="7.5" height="2.2" fill="none" stroke="#c0e890" stroke-width="1"/>
<rect x="1.5" y="14.2" width="7.5" height="2.2" fill="none" stroke="#28c8e8" stroke-width="1"/>
<rect x="1.5" y="17" width="18" height="2.6" fill="none" stroke="#2c9a30" stroke-width="1"/>
</g>
<circle cx="320.9" cy="299.2" r="2.3" fill="#f0906a"/>
<g transform="translate(414.7,356.3)">
<rect x="0.5" y="0.5" width="21" height="20" fill="none" stroke="#fff" stroke-width="1.2"/>
<rect x="1.5" y="1.8" width="9" height="2.2" fill="none" stroke="#fff" stroke-width="1"/>
<rect x="1.5" y="4.8" width="8" height="2.4" fill="none" stroke="#eedc9a" stroke-width="1"/>
<rect x="1.5" y="8" width="9" height="2.4" fill="none" stroke="#38e8e0" stroke-width="1.1"/>
<rect x="1.5" y="11.2" width="7.5" height="2.2" fill="none" stroke="#c0e890" stroke-width="1"/>
<rect x="1.5" y="14.2" width="7.5" height="2.2" fill="none" stroke="#28c8e8" stroke-width="1"/>
<rect x="1.5" y="17" width="18" height="2.6" fill="none" stroke="#2c9a30" stroke-width="1"/>
</g>
<circle cx="412.5" cy="379.3" r="2.3" fill="#f0906a"/>
<g transform="translate(725.7,267.1)">
<rect x="0.5" y="0.5" width="21" height="20" fill="none" stroke="#fff" stroke-width="1.2"/>
<rect x="1.5" y="1.8" width="9" height="2.2" fill="none" stroke="#fff" stroke-width="1"/>
<rect x="1.5" y="4.8" width="8" height="2.4" fill="none" stroke="#eedc9a" stroke-width="1"/>
<rect x="1.5" y="8" width="9" height="2.4" fill="none" stroke="#38e8e0" stroke-width="1.1"/>
<rect x="1.5" y="11.2" width="7.5" height="2.2" fill="none" stroke="#c0e890" stroke-width="1"/>
<rect x="1.5" y="14.2" width="7.5" height="2.2" fill="none" stroke="#28c8e8" stroke-width="1"/>
<rect x="1.5" y="17" width="18" height="2.6" fill="none" stroke="#2c9a30" stroke-width="1"/>
</g>
<circle cx="723.5" cy="290.1" r="2.3" fill="#f0906a"/>
<g transform="translate(805.9,358.6)">
<rect x="0.5" y="0.5" width="21" height="20" fill="none" stroke="#fff" stroke-width="1.2"/>
<rect x="1.5" y="1.8" width="9" height="2.2" fill="none" stroke="#fff" stroke-width="1"/>
<rect x="1.5" y="4.8" width="8" height="2.4" fill="none" stroke="#eedc9a" stroke-width="1"/>
<rect x="1.5" y="8" width="9" height="2.4" fill="none" stroke="#38e8e0" stroke-width="1.1"/>
<rect x="1.5" y="11.2" width="7.5" height="2.2" fill="none" stroke="#c0e890" stroke-width="1"/>
<rect x="1.5" y="14.2" width="7.5" height="2.2" fill="none" stroke="#28c8e8" stroke-width="1"/>
<rect x="1.5" y="17" width="18" height="2.6" fill="none" stroke="#2c9a30" stroke-width="1"/>
</g>
<circle cx="803.7" cy="381.6" r="2.3" fill="#f0906a"/>
<g transform="translate(366.4,339) rotate(41.2)">
<rect x="0.5" y="-13.3" width="28.5" height="3.8" fill="none" stroke="#fff" stroke-width="1.1"/>
<path d="M1 -11 L8 -11 L10 -8 L10 -6 L1 -6 Z" fill="#1a1ac8"/>
<rect x="1" y="-7" width="13" height="2.2" fill="none" stroke="#8a50e8" stroke-width="0.9"/>
<rect x="0.5" y="-4.8" width="13.5" height="2" fill="none" stroke="#6a8890" stroke-width="0.9"/>
<rect x="0" y="-2.7" width="15" height="2" fill="none" stroke="#3c9a38" stroke-width="0.9"/>
</g>
<g transform="translate(567.9,334.5) rotate(-16)">
<rect x="0.5" y="-13.3" width="28.5" height="3.8" fill="none" stroke="#fff" stroke-width="1.1"/>
<path d="M1 -11 L8 -11 L10 -8 L10 -6 L1 -6 Z" fill="#1a1ac8"/>
<rect x="1" y="-7" width="13" height="2.2" fill="none" stroke="#8a50e8" stroke-width="0.9"/>
<rect x="0.5" y="-4.8" width="13.5" height="2" fill="none" stroke="#6a8890" stroke-width="0.9"/>
<rect x="0" y="-2.7" width="15" height="2" fill="none" stroke="#3c9a38" stroke-width="0.9"/>
</g>
<g transform="translate(763.9,336.1) rotate(48.8)">
<rect x="0.5" y="-13.3" width="28.5" height="3.8" fill="none" stroke="#fff" stroke-width="1.1"/>
<path d="M1 -11 L8 -11 L10 -8 L10 -6 L1 -6 Z" fill="#1a1ac8"/>
<rect x="1" y="-7" width="13" height="2.2" fill="none" stroke="#8a50e8" stroke-width="0.9"/>
<rect x="0.5" y="-4.8" width="13.5" height="2" fill="none" stroke="#6a8890" stroke-width="0.9"/>
<rect x="0" y="-2.7" width="15" height="2" fill="none" stroke="#3c9a38" stroke-width="0.9"/>
</g>
<text x="766" y="327" font-family="Liberation Sans" font-size="28" fill="#f2f218" letter-spacing="-1.2">Channel3</text>
</svg>
<!-- nav icons -->
<svg style="left:0;top:0" width="1025" height="746">
<circle cx="957" cy="291.8" r="12.4" fill="none" stroke="#e6e6e6" stroke-width="1.15"/>
<path d="M947.2 289.5 A10 10 0 0 1 966.8 289.5" fill="none" stroke="#e6e6e6" stroke-width="1.15"/>
<path d="M947.2 288.8 Q957 285.5 966.8 288.8" fill="none" stroke="#e6e6e6" stroke-width="1.15"/>
<path d="M947 293 A10 10 0 0 0 967 293" fill="none" stroke="#e6e6e6" stroke-width="1.15"/>
<path d="M950.3 290.8 A6.7 6.7 0 0 0 963.7 290.8" fill="none" stroke="#e6e6e6" stroke-width="1.15"/>
<rect x="944.4" y="316.4" width="15" height="15" fill="none" stroke="#e6e6e6" stroke-width="1.15"/>
<rect x="946.9" y="318.9" width="10.3" height="10.3" fill="none" stroke="#e6e6e6" stroke-width="1.15"/>
<circle cx="958.7" cy="330.5" r="8.4" fill="#000"/>
<g transform="translate(958.7,330.5) rotate(45)"><rect x="8" y="-2.1" width="8.6" height="4.2" fill="#000" stroke="#e6e6e6" stroke-width="1.15"/></g>
<circle cx="958.7" cy="330.5" r="7.6" fill="#000" stroke="#e6e6e6" stroke-width="1.15"/>
<circle cx="958.7" cy="330.5" r="5.2" fill="none" stroke="#e6e6e6" stroke-width="1.15"/>
<path d="M953.5 326.5 L957.2 326.5 L957.2 330 M953.5 329 L955 329 L955 326.5" fill="none" stroke="#e6e6e6" stroke-width="1.15"/>
<g transform="translate(954.6,362.2) rotate(45)"><rect x="9.3" y="-2.2" width="12" height="4.4" fill="#000" stroke="#e6e6e6" stroke-width="1.15"/></g>
<circle cx="954.6" cy="362.2" r="9.6" fill="#000" stroke="#e6e6e6" stroke-width="1.15"/>
<circle cx="954.6" cy="362.2" r="7.4" fill="none" stroke="#e6e6e6" stroke-width="1.15"/>
<path d="M957.4 389.3 L961.9 394.3 L959.0 394.3 L959.0 401.2 L965.9 401.2 L965.9 398.3 L970.9 402.8 L965.9 407.3 L965.9 404.4 L959.0 404.4 L959.0 411.3 L961.9 411.3 L957.4 416.3 L952.9 411.3 L955.8 411.3 L955.8 404.4 L948.9 404.4 L948.9 407.3 L943.9 402.8 L948.9 398.3 L948.9 401.2 L955.8 401.2 L955.8 394.3 L952.9 394.3 Z" fill="#1a1a1a" stroke="#e6e6e6" stroke-width="1.15"/>
<path d="M957.4 393.8 L957.4 411.8 M948.4 402.8 L966.4 402.8" stroke="#000" stroke-width="0.9"/>
<path d="M944.8 428.8 L951.3 428.8 L949.4 430.7 L953.1 434.4 L950.4 437.1 L946.7 433.4 L944.8 435.3 Z" fill="#000" stroke="#e6e6e6" stroke-width="1.1" stroke-linejoin="round"/>
<path d="M969.6 428.8 L963.1 428.8 L965.0 430.7 L961.3 434.4 L964.0 437.1 L967.7 433.4 L969.6 435.3 Z" fill="#000" stroke="#e6e6e6" stroke-width="1.1" stroke-linejoin="round"/>
<path d="M944.8 451.4 L951.3 451.4 L949.4 449.5 L953.1 445.8 L950.4 443.1 L946.7 446.8 L944.8 444.9 Z" fill="#000" stroke="#e6e6e6" stroke-width="1.1" stroke-linejoin="round"/>
<path d="M969.6 451.4 L963.1 451.4 L965.0 449.5 L961.3 445.8 L964.0 443.1 L967.7 446.8 L969.6 444.9 Z" fill="#000" stroke="#e6e6e6" stroke-width="1.1" stroke-linejoin="round"/>
</svg>
<!-- ============ Nodes panel ============ -->
<div class="a" style="left:222px;top:539px;width:796px;height:182px;border:1px solid #a3a7ae;background:#e9ebee"></div>
<div class="a" style="left:223px;top:540px;width:794px;height:19px;background:#e3e5e9"></div>
<div class="t" style="left:228px;top:544px;font-weight:bold;font-size:12px;color:#a4a8b0;letter-spacing:-0.3px">Nodes</div>
<div class="a" style="left:979px;top:547px;width:5px;height:5px;border:1px solid #73767e;border-left-width:2px;background:#9a9da5"></div>
<div class="a" style="left:978px;top:551px;width:8px;height:1px;background:#73767e"></div>
<div class="a" style="left:981px;top:552px;width:1px;height:3px;background:#73767e"></div>
<svg style="left:1000px;top:546px" width="9" height="7"><path d="M0.8 0.5 L8.2 6.5 M8.2 0.5 L0.8 6.5" stroke="#73767e" stroke-width="2"/></svg>
<!-- delete icon -->
<div class="a" style="left:233px;top:568px;width:14px;height:14px;border-radius:2px;border:1px solid #a8231c;background:linear-gradient(#f8b0a8,#e8493a 40%,#d0301f)"></div>
<div class="a" style="left:236px;top:574px;width:8px;height:2px;background:#fff"></div>
<!-- grid -->
<div class="a" style="left:224px;top:592px;width:792px;height:100px;border:1px solid #a9adb4;background:#fff;overflow:hidden">

<div class="a" style="left:0;top:0;width:790px;height:20px;background:linear-gradient(#f9f9fa,#eff0f3);border-bottom:1px solid #d5d8dd"></div>
<div class="a" style="left:15px;top:0;width:1px;height:62px;background:#d5d8dd"></div>
<div class="a" style="left:90px;top:0;width:1px;height:62px;background:#d5d8dd"></div>
<div class="a" style="left:136px;top:0;width:1px;height:62px;background:#d5d8dd"></div>
<div class="a" style="left:288px;top:0;width:1px;height:62px;background:#d5d8dd"></div>
<div class="a" style="left:372px;top:0;width:1px;height:62px;background:#d5d8dd"></div>
<div class="a" style="left:461px;top:0;width:1px;height:62px;background:#d5d8dd"></div>
<div class="a" style="left:560px;top:0;width:1px;height:62px;background:#d5d8dd"></div>
<div class="a" style="left:655px;top:0;width:1px;height:62px;background:#d5d8dd"></div>
<div class="a" style="left:742px;top:0;width:1px;height:62px;background:#d5d8dd"></div>
<div class="t" style="left:19px;top:3px">Result</div>
<div class="t" style="left:95px;top:3px">ID</div>
<div class="t" style="left:140px;top:3px">Name</div>
<div class="t" style="left:292px;top:3px">Outlet</div>
<div class="t" style="left:376px;top:3px">Allow Move</div>
<div class="t" style="left:465px;top:3px">GL</div>
<div class="t" style="left:564px;top:3px">IL</div>
<div class="t" style="left:659px;top:3px">SIL</div>
<div class="t" style="left:746px;top:3px">Depth</div>
<div class="a" style="left:0;top:20px;width:15px;height:42px;background:#eef0f2"></div>
<div class="a" style="left:91px;top:19px;width:45px;height:20px;background:#efe28e"></div>
<div class="a" style="left:137px;top:19px;width:151px;height:20px;background:#efe28e"></div>
<div class="a" style="left:561px;top:19px;width:94px;height:20px;background:#efe28e"></div>
<div class="a" style="left:656px;top:19px;width:86px;height:20px;background:#efe28e"></div>
<div class="a" style="left:743px;top:19px;width:30px;height:20px;background:#efe28e"></div>
<div class="a" style="left:91px;top:40px;width:45px;height:20px;background:#eceef1"></div>
<div class="a" style="left:137px;top:40px;width:151px;height:20px;background:#eceef1"></div>
<div class="a" style="left:289px;top:40px;width:83px;height:20px;background:#eceef1"></div>
<div class="a" style="left:373px;top:40px;width:88px;height:20px;background:#eceef1"></div>
<div class="a" style="left:462px;top:40px;width:98px;height:20px;background:#eceef1"></div>
<div class="a" style="left:561px;top:40px;width:94px;height:20px;background:#eceef1"></div>
<div class="a" style="left:656px;top:40px;width:86px;height:20px;background:#eceef1"></div>
<div class="a" style="left:743px;top:40px;width:30px;height:20px;background:#eceef1"></div>
<div class="a" style="left:0;top:40px;width:773px;height:1px;background:#d5d8dd"></div>
<div class="a" style="left:0;top:61px;width:773px;height:1px;background:#d5d8dd"></div>
<div class="a" style="left:18px;top:25px;width:9px;height:9px;border:1px solid #c5c8ce"></div>
<div class="a" style="left:20px;top:29px;width:5px;height:1px;background:#b0b3ba"></div>
<div class="a" style="left:22px;top:27px;width:1px;height:5px;background:#b0b3ba"></div>
<div class="t" style="left:33px;top:24px">NIL</div>
<div class="t" style="left:90px;width:43px;text-align:right;top:24px">3</div>
<div class="t" style="left:140px;top:24px">Node3</div>
<div class="a" style="left:324px;top:23px;width:13px;height:13px;border:1px solid #8e9299;background:#fff;box-shadow:inset 0 0 0 2px #dcdfe4"></div>
<div class="a" style="left:411px;top:23px;width:13px;height:13px;border:1px solid #8e9299;background:#fff;box-shadow:inset 0 0 0 2px #dcdfe4"></div>
<svg style="left:412px;top:20px" width="14" height="16"><path d="M2 9 L5 13.5 L12.5 1.5" fill="none" stroke="#222" stroke-width="2"/></svg>
<div class="t" style="left:461px;width:96px;text-align:right;top:24px">5.000 m</div>
<div class="t" style="left:565px;top:24px">0.000 m</div>
<div class="t" style="left:655px;width:84px;text-align:right;top:24px">0.000 m</div>
<div class="a" style="left:18px;top:46px;width:9px;height:9px;border:1px solid #c5c8ce"></div>
<div class="a" style="left:20px;top:50px;width:5px;height:1px;background:#b0b3ba"></div>
<div class="a" style="left:22px;top:48px;width:1px;height:5px;background:#b0b3ba"></div>
<div class="t" style="left:33px;top:45px">NIL</div>
<div class="t" style="left:90px;width:43px;text-align:right;top:45px">4</div>
<div class="t" style="left:140px;top:45px">Node4</div>
<div class="a" style="left:324px;top:44px;width:13px;height:13px;border:1px solid #8e9299;background:#fff;box-shadow:inset 0 0 0 2px #dcdfe4"></div>
<div class="a" style="left:411px;top:44px;width:13px;height:13px;border:1px solid #8e9299;background:#fff;box-shadow:inset 0 0 0 2px #dcdfe4"></div>
<svg style="left:412px;top:41px" width="14" height="16"><path d="M2 9 L5 13.5 L12.5 1.5" fill="none" stroke="#222" stroke-width="2"/></svg>
<div class="t" style="left:461px;width:96px;text-align:right;top:45px">5.000 m</div>
<div class="t" style="left:565px;top:45px">0.000 m</div>
<div class="t" style="left:655px;width:84px;text-align:right;top:45px">0.000 m</div>
<svg style="left:6px;top:48px" width="5" height="8"><path d="M0 0 L4.5 4 L0 8 Z" fill="#111"/></svg>
<div class="a" style="left:78px;top:49px;width:0;height:0;border-left:3.5px solid transparent;border-right:3.5px solid transparent;border-top:4px solid #111"></div>
<div class="a" style="left:773px;top:19px;width:17px;height:62px;background:#fff"></div>
<svg style="left:777px;top:25px" width="8" height="5"><path d="M0 4.5 L4 0 L8 4.5 Z" fill="#8d9098"/></svg>
<div class="a" style="left:777px;top:47px;width:8px;height:16px;border:1px solid #a5a8ae;border-radius:4px;background:linear-gradient(90deg,#f4f4f6,#dcdde1)"></div>
<svg style="left:777px;top:70px" width="8" height="5"><path d="M0 0 L8 0 L4 4.5 Z" fill="#8d9098"/></svg>
<div class="a" style="left:0;top:81px;width:790px;height:17px;background:#eef0f2"></div>
<div class="a" style="left:773px;top:81px;width:17px;height:17px;background:#e6e8eb"></div>
<svg style="left:6px;top:86px" width="5" height="8"><path d="M4.5 0 L0 4 L4.5 8 Z" fill="#8d9098"/></svg>
<svg style="left:761px;top:86px" width="5" height="8"><path d="M0 0 L4.5 4 L0 8 Z" fill="#8d9098"/></svg>
<div class="a" style="left:16px;top:85px;width:570px;height:9px;border:1px solid #a5a8ae;border-radius:5px;background:linear-gradient(#f4f4f6,#dcdde1)"></div>
</div>

<!-- nodes bottom tabs -->
<div class="a" style="left:223px;top:692px;width:793px;height:27px;background:linear-gradient(#d6d8dd,#e6e8ec 45%,#eceef1)"></div>
<div class="a" style="left:306px;top:692px;width:52px;height:27px;background:#eceef1;border-left:1px solid #c9ccd2;border-right:1px solid #d8dbe0"></div>
<div class="t" style="left:237px;top:699px">Information</div>
<div class="t" style="left:316px;top:699px">Nodes</div>
<div class="t" style="left:368px;top:699px">Channels</div>
<div class="t" style="left:435px;top:699px">Networks</div>

<!-- ============ status bar ============ -->
<div class="a" style="left:0;top:724px;width:1025px;height:22px;background:linear-gradient(#d9dbe0,#cfd2d8)"></div>
<div class="t" style="left:14px;top:730px;font-size:12px">Info</div>
<div class="a" style="left:44px;top:727px;width:1px;height:17px;background:#b5b8bf;box-shadow:1px 0 0 #eceef1"></div>
<div class="a" style="left:52px;top:729px;width:150px;height:14px;border:1px solid #c0c3c9;background:#f8f8f9"></div>
<div class="t" style="left:770px;top:730px;font-size:12px">Guideline</div>
<div class="a" style="left:826px;top:726px;width:79px;height:20px;background:#fff;border:1px solid #e0e2e6"></div>
<div class="t" style="left:830px;top:730px;font-size:12px">MSMA2</div>
<div class="t" style="left:917px;top:730px;font-size:12px;letter-spacing:-0.4px">(-277.226,31.067)</div>

</body></html>
